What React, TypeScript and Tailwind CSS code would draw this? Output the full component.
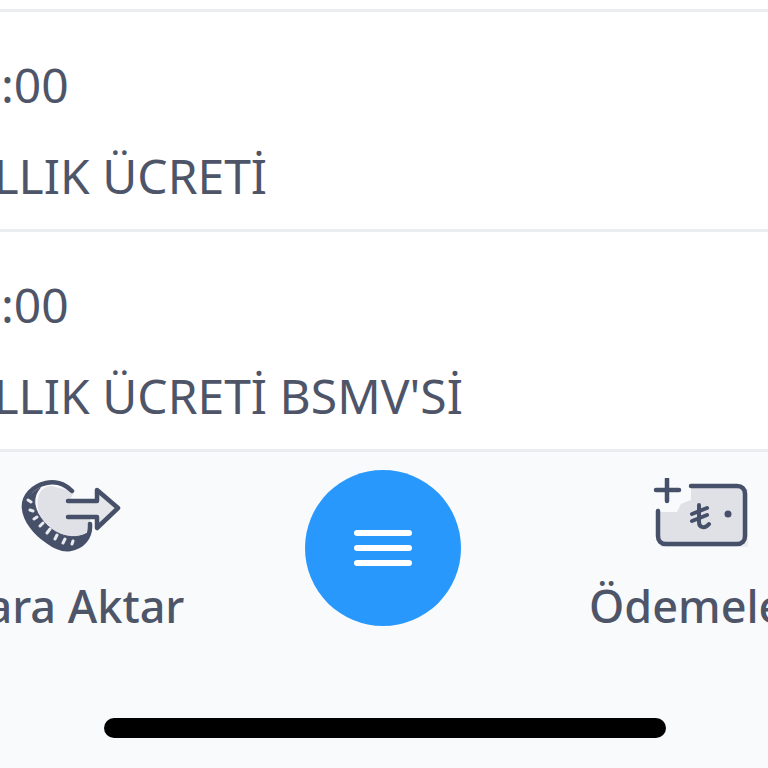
function MoneyTransferIcon() {
  return (
    <svg width="102" height="76" viewBox="0 0 102 76" fill="none" stroke="#475069" strokeLinecap="round" strokeLinejoin="round">
      <path d="M32 8C22 8 16 16 18 30C21 44 32 58 50 60C60 60 68 56 70 48L70 40H50V22L54 14Z" fill="#dfe1e6" stroke="none" />
      <path d="M50 23H77V12L98 30L77 50V39H50Z" fill="#e4e6ea" stroke="none" />
      <path d="M52 13C44 5 34 3 26 5C13 8 3 18 4 30C5 42 15 55 27 63C35 69 44 72 50 71C62 69 71 60 70 46" strokeWidth="4.5" />
      <path d="M20 10C9 16 2 24 4 33C7 46 18 58 30 66C38 71 48 73 54 70C62 67 68 60 70 53C62 60 50 60 40 56C28 51 17 38 15 27C14 20 16 15 20 10Z" fill="#475069" stroke="#475069" strokeWidth="1" />
      <path d="M8 22L11 24M10 32L13 33M14 41L17 39M20 48L23 45M27 55L30 51M35 61L37 57M43 65L45 61M52 66L53 63" stroke="#e8eaee" strokeWidth="3" />
      <path d="M48 23H77V12L98 30L77 50V39H48" strokeWidth="4.5" />
    </svg>
  )
}

function PaymentsIcon() {
  return (
    <svg width="96" height="72" viewBox="0 0 96 72" fill="none" stroke="#475069" strokeLinecap="round" strokeLinejoin="round">
      <path d="M7 34H24L28 26L38 22V11H95V69H7Z" fill="#ebedf0" stroke="none" />
      <path d="M7 34H24L28 26L38 22V10H91V64H7Z" fill="#dfe1e6" stroke="none" />
      <path d="M5 33V58C5 63 8 66 13 66H84C89 66 92 63 92 58V16C92 11 89 8 84 8H38" strokeWidth="4.5" />
      <path d="M14 1V23M3 12H26" strokeWidth="4.5" />
      <path d="M46 27V44C46 50 52 51 56 46M39 36L54 30M39 43L54 37" strokeWidth="4" />
      <circle cx="75" cy="36" r="3.5" fill="#475069" stroke="none" />
    </svg>
  )
}

function FeeRow({ label }: { label: string }) {
  return (
    <div className="h-[220px] bg-white border-b-[3px] border-[#ebedf0] flex flex-col whitespace-nowrap text-[#4e5568] text-[48px]">
      <p className="ml-[-54px] mt-[41px] leading-[64px]">00:00</p>
      <p className="ml-[-50px] mt-[27px] leading-[64px]">{label}</p>
    </div>
  )
}

export default function App() {
  return (
    <div
      className="w-[768px] h-[768px] overflow-hidden flex flex-col bg-[#f8fafc]"
      style={{ fontFamily: '"Noto Sans", "Open Sans", sans-serif' }}
    >
      <div className="h-[12px] bg-white border-b-[3px] border-[#ebedf0]" />
      <FeeRow label="YILLIK ÜCRETİ" />
      <FeeRow label="YILLIK ÜCRETİ BSMV'Sİ" />
      <div className="flex-1 relative">
        <div className="absolute left-[20px] top-[26px]">
          <MoneyTransferIcon />
        </div>
        <span className="absolute left-[-41px] top-[124px] text-[45px] leading-[60px] font-medium text-[#4e5568] whitespace-nowrap">
          Para Aktar
        </span>
        <button className="absolute left-[305px] top-[18px] w-[156px] h-[156px] rounded-full bg-[#2898fd] flex flex-col items-center justify-center gap-[9px]">
          <span className="w-[58px] h-[6px] rounded-full bg-white" />
          <span className="w-[58px] h-[6px] rounded-full bg-white" />
          <span className="w-[58px] h-[6px] rounded-full bg-white" />
        </button>
        <div className="absolute left-[653px] top-[26px]">
          <PaymentsIcon />
        </div>
        <span className="absolute left-[589px] top-[124px] text-[45px] leading-[60px] font-medium text-[#4e5568] whitespace-nowrap">
          Ödemeler
        </span>
        <div className="absolute left-[104px] top-[266px] w-[562px] h-[20px] rounded-full bg-black" />
      </div>
    </div>
  )
}
